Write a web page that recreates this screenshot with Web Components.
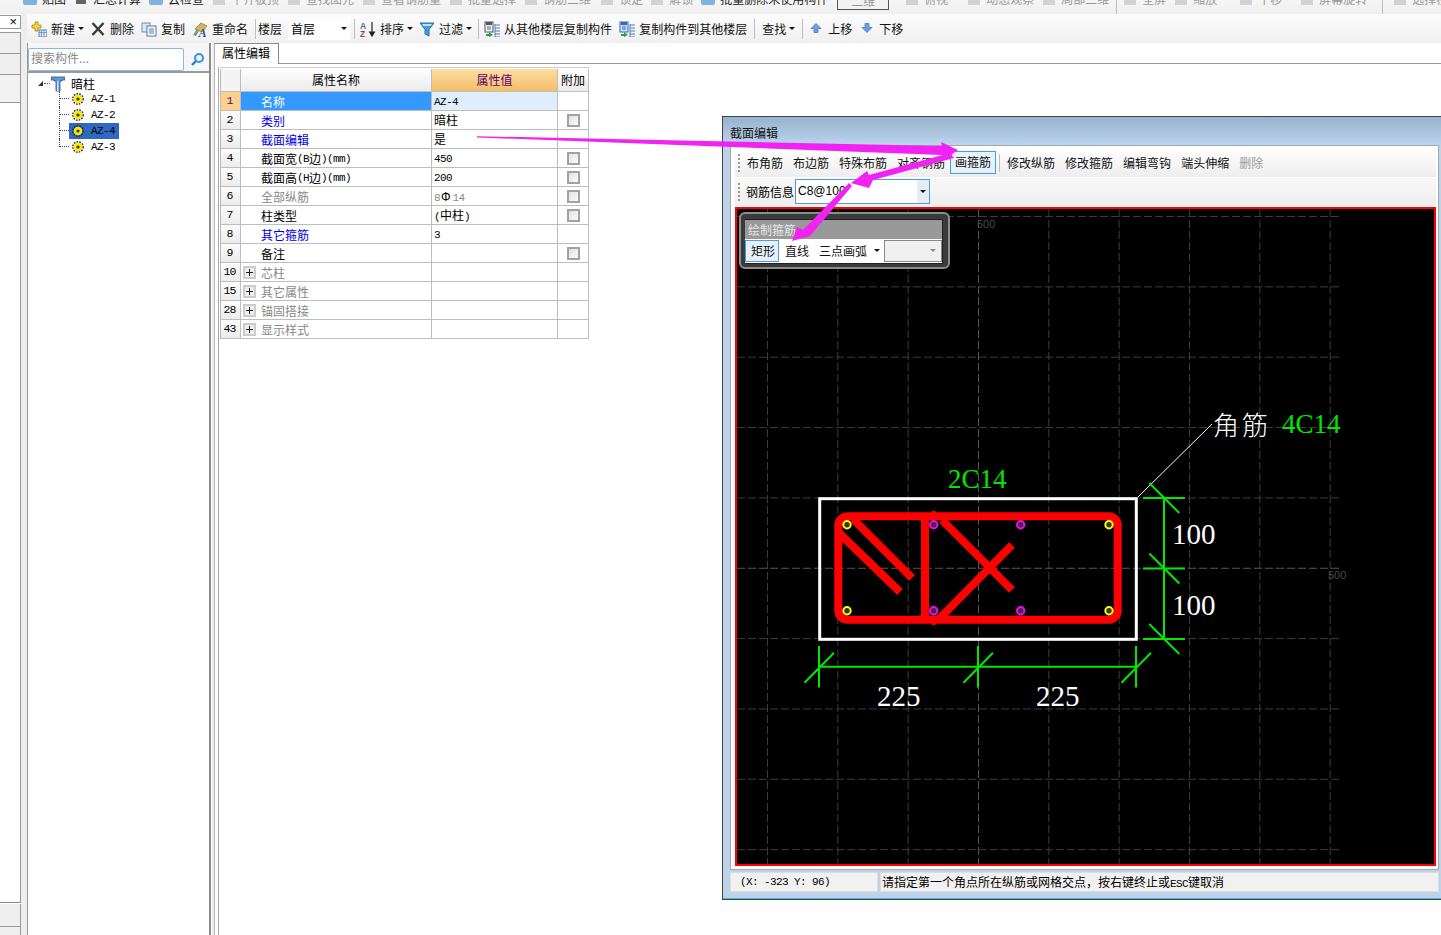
<!DOCTYPE html>
<html lang="zh">
<head>
<meta charset="utf-8">
<title>属性编辑</title>
<style>
html, body { margin: 0; padding: 0; height: 100%; overflow: hidden; background: #fff; }
body { font: 12px/14px "Noto Sans CJK SC", sans-serif; color: #000; }
</style>
</head>
<body>
<app-shell>
  <top-strip slot="strip">
    <top-item icon="blue" dark style="margin-left:22px">贴图</top-item>
    <top-item icon="dark" dark style="margin-left:7px">汇总计算</top-item>
    <top-item icon="blue" dark style="margin-left:7px">云检查</top-item>
    <top-item style="margin-left:7px">平齐板顶</top-item>
    <top-item style="margin-left:7px">查找图元</top-item>
    <top-item style="margin-left:7px">查看钢筋量</top-item>
    <top-item style="margin-left:7px">批量选择</top-item>
    <top-item style="margin-left:7px">钢筋三维</top-item>
    <top-item style="margin-left:8px">锁定</top-item>
    <top-item style="margin-left:6px">解锁</top-item>
    <top-item icon="blue" dark style="margin-left:7px">批量删除未使用构件</top-item>
    <view-box style="margin-left:9px">二维</view-box>
    <top-item style="margin-left:15px">俯视</top-item>
    <top-item style="margin-left:18px">动态观察</top-item>
    <top-item style="margin-left:7px">局部三维</top-item>
    <tool-sep style="margin-left:7px"></tool-sep>
    <top-item style="margin-left:5px">全屏</top-item>
    <top-item style="margin-left:7px">缩放</top-item>
    <top-item style="margin-left:21px">平移</top-item>
    <top-item style="margin-left:17px">屏幕旋转</top-item>
    <tool-sep style="margin-left:15px"></tool-sep>
    <top-item style="margin-left:9px">选择楼层</top-item>
  </top-strip>

  <side-rail slot="rail"></side-rail>

  <main-toolbar slot="toolbar">
    <tool-btn icon="add" arrow style="margin-left:4px">新建</tool-btn>
    <tool-btn icon="del" style="margin-left:6px">删除</tool-btn>
    <tool-btn icon="copy" style="margin-left:7px">复制</tool-btn>
    <tool-btn icon="rename" style="margin-left:7px">重命名</tool-btn>
    <tool-sep style="margin-left:7px"></tool-sep>
    <tool-btn style="margin-left:2px">楼层</tool-btn>
    <floor-combo style="margin-left:6px">首层</floor-combo>
    <tool-sep style="margin-left:4px"></tool-sep>
    <tool-btn icon="sort" arrow style="margin-left:5px">排序</tool-btn>
    <tool-btn icon="funnel" arrow style="margin-left:6px">过滤</tool-btn>
    <tool-sep style="margin-left:6px"></tool-sep>
    <tool-btn icon="from" style="margin-left:5px">从其他楼层复制构件</tool-btn>
    <tool-btn icon="to" style="margin-left:7px">复制构件到其他楼层</tool-btn>
    <tool-sep style="margin-left:7px"></tool-sep>
    <tool-btn arrow style="margin-left:7px">查找</tool-btn>
    <tool-sep style="margin-left:7px"></tool-sep>
    <tool-btn icon="up" style="margin-left:5px">上移</tool-btn>
    <tool-btn icon="down" style="margin-left:7px">下移</tool-btn>
  </main-toolbar>

  <comp-panel slot="left">
    <tree-root>暗柱</tree-root>
    <tree-node>AZ-1</tree-node>
    <tree-node>AZ-2</tree-node>
    <tree-node selected>AZ-4</tree-node>
    <tree-node last>AZ-3</tree-node>
  </comp-panel>

  <prop-panel slot="right">
    <prop-head></prop-head>
    <prop-row num="1" active>名称<mono-text slot="value">AZ-4</mono-text></prop-row>
    <prop-row num="2" kind="link" check>类别<span slot="value">暗柱</span></prop-row>
    <prop-row num="3" kind="link">截面编辑<span slot="value">是</span></prop-row>
    <prop-row num="4" check>截面宽<mono-text>(B</mono-text>边<mono-text>)(mm)</mono-text><mono-text slot="value">450</mono-text></prop-row>
    <prop-row num="5" check>截面高<mono-text>(H</mono-text>边<mono-text>)(mm)</mono-text><mono-text slot="value">200</mono-text></prop-row>
    <prop-row num="6" kind="dim" check>全部纵筋<span slot="value" style="color:#888"><mono-text>8</mono-text><span style="color:#000;font:12px/14px 'Liberation Sans',sans-serif;margin:0 2px 0 1px">Φ</span><mono-text>14</mono-text></span></prop-row>
    <prop-row num="7" check>柱类型<span slot="value"><mono-text>(</mono-text>中柱<mono-text>)</mono-text></span></prop-row>
    <prop-row num="8" kind="link">其它箍筋<mono-text slot="value">3</mono-text></prop-row>
    <prop-row num="9" check>备注</prop-row>
    <prop-row num="10" kind="dim" group>芯柱</prop-row>
    <prop-row num="15" kind="dim" group>其它属性</prop-row>
    <prop-row num="28" kind="dim" group>锚固搭接</prop-row>
    <prop-row num="43" kind="dim" group>显示样式</prop-row>
  </prop-panel>

  <section-dialog slot="dialog">
    <dialog-bar>
      <bar-text>布角筋</bar-text>
      <bar-text>布边筋</bar-text>
      <bar-text>特殊布筋</bar-text>
      <bar-text>对齐钢筋</bar-text>
      <bar-text active style="margin:0 -5px">画箍筋</bar-text>
      <tool-sep style="height:18px;margin:0 -3px 0 -2px"></tool-sep>
      <bar-text>修改纵筋</bar-text>
      <bar-text>修改箍筋</bar-text>
      <bar-text>编辑弯钩</bar-text>
      <bar-text>端头伸缩</bar-text>
      <bar-text disabled>删除</bar-text>
    </dialog-bar>
    <rebar-row slot="row2"></rebar-row>
    <rebar-canvas slot="canvas">
      <draw-palette></draw-palette>
    </rebar-canvas>
  </section-dialog>

  <arrow-overlay slot="overlay"></arrow-overlay>
</app-shell>

<script>
const GRAY = '<rect x="2" y="1" width="12" height="13" fill="#d2d2d2"/><rect x="4" y="3" width="8" height="2" fill="#eee"/>';
const ICONS = {
  gray: GRAY,
  blue: '<rect x="1" y="1" width="14" height="13" rx="2" fill="#7fb2de"/><rect x="3" y="2" width="10" height="3" fill="#d5e9f7"/><rect x="3" y="5" width="6" height="1" fill="#3d86c8"/>',
  dark: '<rect x="3" y="2" width="10" height="11" fill="#666"/><rect x="5" y="1" width="2" height="6" fill="#fff"/>',
  add: '<path d="M4 1h3v3h3v3H7v3H4V7H1V4h3z" fill="#f4d63c" stroke="#a8861a" stroke-width=".8"/><rect x="8" y="9" width="8" height="7" fill="#dfeaf6" stroke="#5b84b4"/><path d="M8 11.5h8M10.5 9v7M13 9v7" stroke="#5b84b4" stroke-width=".7"/>',
  del: '<path d="M2.5 2l11 12M13.5 2L2.5 14" stroke="#3a3a3a" stroke-width="2.4"/>',
  copy: '<rect x="1" y="2" width="8" height="9" fill="#dbe7f5" stroke="#6a8fbd"/><rect x="6" y="5" width="9" height="10" fill="#fff" stroke="#4d78ab"/><path d="M8 8h5M8 10h5M8 12h5" stroke="#4d78ab"/>',
  rename: '<path d="M3 8l6-6 6 3-5 6z" fill="#d7b25a" stroke="#8c7a3c" stroke-width=".8"/><path d="M1 14l4-6 2 2-3 5z" fill="#7f9b7f"/><text x="6.5" y="16" font-family="Liberation Serif" font-style="italic" font-weight="700" font-size="12" fill="#2456a8">A</text>',
  sort: '<text x="0" y="7.5" font-family="Liberation Sans" font-weight="700" font-size="8.5" fill="#3a6fb5">A</text><text x="0" y="16" font-family="Liberation Sans" font-weight="700" font-size="8.5" fill="#a5443c">Z</text><path d="M12 1v13M9.6 11l2.4 4 2.4-4z" stroke="#222" stroke-width="1.2" fill="#222"/>',
  funnel: '<path d="M1 2h14L10 8.5V15l-4-2V8.5z" fill="#3f9ce0" stroke="#2a6cab"/><path d="M3 3h10l-1.5 2h-7z" fill="#bfe3fa"/>',
  from: '<rect x="1" y="1" width="8" height="10" fill="#f2f2f2" stroke="#556"/><path d="M2 1h6v3H2z" fill="#556"/><path d="M3 6h4M3 8h4" stroke="#667"/><path d="M2 13h3v-2l4 3-4 2v-1H2z" fill="#2c9e3a"/><path d="M11 4h5M11 7h5M11 10h5M11 13h5M11 16h5M11 3v13" stroke="#4d7fb8"/>',
  to: '<rect x="1" y="1" width="8" height="10" fill="#cfe0f6" stroke="#36c"/><path d="M2 1h6v3H2z" fill="#36c"/><path d="M3 6h4M3 8h4" stroke="#36c"/><path d="M2 13h3v-2l4 3-4 2v-1H2z" fill="#2c9e3a"/><path d="M11 4h5M11 7h5M11 10h5M11 13h5M11 16h5M11 3v13" stroke="#4d7fb8"/>',
  up: '<path d="M8 2.5l5 5h-3v4H6v-4H3z" fill="#6aa2e6" stroke="#3b6fb8" stroke-width=".7"/>',
  down: '<path d="M8 11.5l-5-5h3v-4h4v4h3z" fill="#6aa2e6" stroke="#3b6fb8" stroke-width=".7"/>'
};

const CARET = 'display:inline-block;width:0;height:0;border:3px solid transparent;border-top:3px solid #111;border-bottom:0;';

// every element renders once, when it gets into the page, so attributes can be read
class Shadowed extends HTMLElement {
  connectedCallback() {
    if (this.shadowRoot) return;
    const shadow = this.attachShadow({ mode: 'open' });
    shadow.innerHTML = `<style>${this.constructor.css}</style>${this.html()}`;
  }
  html() { return '<slot></slot>'; }
}

class AppShell extends Shadowed {
  static css = `
:host { display: flex; flex-direction: column; position: relative; width: 1441px; height: 935px; overflow: hidden; }
.row { display: flex; flex: 1; min-height: 0; }
.work { display: flex; flex-direction: column; flex: 1; min-width: 0; }
.panes { display: flex; flex: 1; min-height: 0; }`;
  html() {
    return `<slot name="strip"></slot>
<div class="row"><slot name="rail"></slot>
  <div class="work"><slot name="toolbar"></slot><div class="panes"><slot name="left"></slot><slot name="right"></slot></div></div>
</div>
<slot name="dialog"></slot><slot name="overlay"></slot>`;
  }
}

class TopStrip extends Shadowed {
  static css = `:host { display: flex; flex: none; height: 14px; overflow: hidden; background: linear-gradient(#f6f6f6, #efefef); white-space: nowrap; }`;
}

class TopItem extends Shadowed {
  static css = `
:host { display: inline-flex; flex: none; align-items: center; gap: 4px; height: 14px; margin-top: -8px; color: #9a9a9a; }
:host([dark]) { color: #222; }
svg { width: 16px; height: 16px; flex: none; }`;
  html() {
    return `<svg viewBox="0 0 16 16">${ICONS[this.getAttribute('icon') || 'gray']}</svg><slot></slot>`;
  }
}

class ViewBox extends Shadowed {
  static css = `
:host { display: block; flex: none; box-sizing: border-box; width: 52px; height: 10px; border: 1px solid #555; border-top: 0; color: #999; text-align: center; line-height: 2px; background: #f2f2f2; }`;
}

class ToolSep extends Shadowed {
  static css = `:host { display: block; flex: none; align-self: center; width: 1px; height: 20px; background: #bdbdbd; }`;
  html() { return ''; }
}

class SideRail extends Shadowed {
  static css = `
:host { display: flex; flex-direction: column; flex: none; box-sizing: border-box; width: 27px; background: linear-gradient(90deg, #fff 21px, #eee 21px); }
div { box-sizing: border-box; width: 21px; flex: none; border-right: 1px solid #999; }
.tab { height: 14px; margin-top: 1px; background: #fff; border: 1px solid #999; border-left: 0; font: 13px/12px "Liberation Sans", sans-serif; text-align: right; padding-right: 3px; }
.btn { height: 21px; background: #efefef; border-top: 1px solid #999; }
.list { flex: 1; background: #fff; border-top: 1px solid #999; border-bottom: 1px solid #888; }`;
  html() {
    return `<div class="tab">×</div><div class="btn" style="margin-top:3px"></div><div class="btn"></div><div class="btn" style="height:28px;background:#f2f2f2"></div>
<div class="list"></div><div class="btn" style="margin-top:1px;height:22px;border-top:0"></div><div class="btn" style="height:9px"></div>`;
  }
}

class MainToolbar extends Shadowed {
  static css = `:host { display: flex; flex: none; align-items: center; height: 29px; background: linear-gradient(#fdfdfd, #efefef); white-space: nowrap; }`;
}

class ToolBtn extends Shadowed {
  static css = `
:host { display: inline-flex; flex: none; align-items: center; gap: 4px; height: 20px; color: #111; }
svg { width: 16px; height: 16px; flex: none; }
i { ${CARET} margin-left: -1px; }`;
  html() {
    const icon = this.getAttribute('icon');
    return `${icon ? `<svg viewBox="0 0 16 16">${ICONS[icon]}</svg>` : ''}<slot></slot>${this.hasAttribute('arrow') ? '<i></i>' : ''}`;
  }
}

class FloorCombo extends Shadowed {
  static css = `
:host { display: flex; flex: none; align-items: center; justify-content: space-between; box-sizing: border-box; width: 62px; height: 22px; padding: 0 3px; background: #fff; }
i { ${CARET} }`;
  html() { return `<slot></slot><i></i>`; }
}

class CompPanel extends Shadowed {
  static css = `
:host { display: flex; flex: none; box-sizing: border-box; width: 187px; background: linear-gradient(90deg, #fff 184px, #eee 184px); border-left: 1px solid #999; }
.col { display: flex; flex-direction: column; width: 183px; box-sizing: border-box; border-right: 2px solid #8c8c8c; }
.search { display: flex; flex: none; align-items: center; gap: 6px; height: 30px; box-sizing: border-box; padding-top: 5px; background: #f6f6f8; border-bottom: 2px solid #9a9a9a; }
.box { box-sizing: border-box; width: 156px; height: 23px; margin-top: -1px; padding: 2px 2px; background: #fff; border: 1px solid #8cb6dc; border-radius: 2px; color: #888; }
svg { width: 15px; height: 15px; margin-top: -1px; }
.tree { flex: 1; padding-top: 3px; background: #fff; }`;
  html() {
    return `<div class="col"><div class="search"><div class="box">搜索构件...</div>
<svg viewBox="0 0 15 15"><circle cx="9" cy="6" r="4" fill="#e4f2fc" stroke="#3f93d6" stroke-width="2"/><path d="M6 9l-4 4" stroke="#2f7cc0" stroke-width="2.4"/></svg></div>
<div class="tree"><slot></slot></div></div>`;
  }
}

class TreeRoot extends Shadowed {
  static css = `
:host { display: flex; align-items: center; height: 15px; padding-left: 10px; }
i { width: 0; height: 0; border-style: solid; border-width: 0 0 5px 5px; border-color: transparent transparent #333 transparent; }
b { width: 6px; margin: 0 1px; border-top: 1px dotted #555; }
svg { width: 14px; height: 16px; margin-right: 6px; flex: none; }`;
  html() {
    return `<i></i><b></b><svg viewBox="0 0 14 16"><path d="M0 1h14v3h-3v1H9v10H5V5H3V4H0z" fill="#5e9ad6" stroke="#23518f" stroke-width=".8"/><path d="M6 5h1.5v10H6z" fill="#d4e6f7"/></svg><slot></slot>`;
  }
}

class TreeNode extends Shadowed {
  static css = `
:host { display: flex; align-items: center; height: 16px; margin-left: 31px; border-left: 1px dotted #444; font: 11px/17px "Liberation Mono", monospace; letter-spacing: -.6px; box-sizing: border-box; }
:host([last]) { border-left-color: transparent; }
.c { width: 9px; height: 8px; align-self: flex-start; border-bottom: 1px dotted #444; flex: none; box-sizing: border-box; }
:host([last]) .c { border-left: 1px dotted #444; margin-left: -1px; width: 10px; }
.l { display: flex; align-items: center; gap: 7px; height: 16px; padding: 0 3px 0 3px; width: 44px; }
:host([selected]) .l { background: #2f68c2; }
svg { width: 12px; height: 12px; flex: none; }`;
  html() {
    return `<div class="c"></div><div class="l"><svg viewBox="0 0 12 12"><circle cx="6" cy="6" r="5.2" fill="none" stroke="#222" stroke-width="1.4" stroke-dasharray="1.6 1.2"/><circle cx="6" cy="6" r="4.3" fill="#ffe800"/><circle cx="6" cy="6" r="1.6" fill="#333"/></svg><slot></slot></div>`;
  }
}

class PropPanel extends Shadowed {
  static css = `
:host { display: flex; flex-direction: column; flex: 1; min-width: 0; box-sizing: border-box; border-left: 1px solid #b4b4b4; background: #fff; }
.tabs { display: flex; flex: none; height: 21px; box-sizing: border-box; }
.tab { box-sizing: border-box; width: 64px; height: 21px; padding: 2px 0 0 7px; border: 1px solid #8a8a8a; border-bottom: 0; border-left: 0; background: #fff; }
.rest { flex: 1; border-bottom: 1px solid #999; }
.frame { flex: 1; margin: 3px 0 0 3px; border-left: 1px solid #aaa; padding-left: 1px; }
.table { width: 369px; border-top: 1px solid #ccc; padding-top: 1px; }
.inner { border-left: 1px solid #bbb; }`;
  html() {
    return `<div class="tabs"><div class="tab">属性编辑</div><div class="rest"></div></div>
<div class="frame"><div class="table"><div class="inner"><slot></slot></div></div></div>`;
  }
}

const COLUMNS = 'display: grid; grid-template-columns: 20px 191px 126px 31px;';
const CELL = 'box-sizing: border-box; border-right: 1px solid #bdbdbd; border-bottom: 1px solid #bdbdbd; min-width: 0;';

class PropHead extends Shadowed {
  static css = `
:host { ${COLUMNS} grid-template-rows: 23px; height: 23px; }
div { ${CELL} text-align: center; line-height: 21px; background: linear-gradient(#fff, #ebebeb); }
.v { background: linear-gradient(#fdddA4, #f3bf66); color: #5e0070; }
.n { background: #f4f4f4; }`;
  html() { return `<div class="n"></div><div>属性名称</div><div class="v">属性值</div><div>附加</div>`; }
}

class PropRow extends Shadowed {
  static css = `
:host { ${COLUMNS} grid-template-rows: 19px; height: 19px; }
div { ${CELL} line-height: 18px; }
.n { font: 11.5px/17px "Liberation Mono", monospace; letter-spacing: -1px; text-align: center; background: linear-gradient(#fcfcfc, #ececec); padding: 0 2px 0 0; }
.name { display: flex; align-items: center; padding: 2px 0 0 20px; }
.val { padding-left: 2px; white-space: nowrap; }
.val ::slotted(mono-text) { vertical-align: 1px; }
.add { display: flex; align-items: center; justify-content: center; padding: 0; }
:host([active]) .n { background: #fdd08e; color: #5e0070; }
:host([active]) .name { background: #3399ff; color: #fff; }
:host([active]) .val { background: #deeefc; }
:host([kind=link]) .name { color: #0000e0; }
:host([kind=dim]) .name { color: #888; }
.chk { width: 13px; height: 13px; box-sizing: border-box; border: 2px solid #a2a2a2; background: linear-gradient(135deg, #e2e2e2, #fbfbfb); }
.plus { width: 13px; height: 13px; box-sizing: border-box; border: 2px solid #ccc; margin: -2px 5px 0 -18px; background: linear-gradient(90deg, #222, #222) center/7px 1px no-repeat, linear-gradient(#222, #222) center/1px 7px no-repeat, #eee; flex: none; }`;
  html() {
    const plus = this.hasAttribute('group');
    return `<div class="n">${this.getAttribute('num')}</div>
<div class="name">${plus ? '<span class="plus"></span>' : ''}<slot></slot></div>
<div class="val"><slot name="value"></slot></div>
<div class="add">${this.hasAttribute('check') ? '<span class="chk"></span>' : ''}</div>`;
  }
}

class MonoText extends Shadowed {
  static css = `:host { display: inline; font: 11px/14px "Liberation Mono", monospace; letter-spacing: -.6px; }`;
}

class SectionDialog extends Shadowed {
  static css = `
:host { display: flex; flex-direction: column; position: absolute; left: 722px; top: 116px; width: 719px; height: 784px; box-sizing: border-box; border: 1px solid #444; border-right: 0; background: #bdd3ea; box-shadow: inset 0 -1px 0 #3fb6e6; }
.title { flex: none; height: 28px; box-sizing: border-box; padding: 9px 0 0 7px; background: linear-gradient(#97b2ce, #bcd4ec); color: #111; }
.frame { flex: none; display: flex; flex-direction: column; box-sizing: border-box; width: 709px; height: 725px; margin-left: 7px; border: 1px solid #a8a8a8; padding: 2px 2px 3px 4px; background: #fff; }
.bar { height: 29px; flex: none; display: flex; }
.row2 { height: 28px; flex: none; margin-top: 1px; }
.stat { display: flex; gap: 2px; height: 20px; margin: 2px 0 0 7px; width: 709px; }
.stat div { box-sizing: border-box; height: 20px; background: #f1f1f1; border: 1px solid #ddd; line-height: 18px; white-space: nowrap; }
.x { width: 148px; padding-left: 9px; font: 11px/18px "Liberation Mono", monospace !important; letter-spacing: -.6px; }
.t { flex: 1; padding-left: 1px; }
.t span { font: 11px/14px "Liberation Mono", monospace; letter-spacing: -.6px; }`;
  html() {
    return `<div class="title">截面编辑</div>
<div class="frame"><div class="bar"><slot></slot></div><div class="row2"><slot name="row2"></slot></div><slot name="canvas"></slot></div>
<div class="stat"><div class="x">(X: -323 Y: 96)</div><div class="t">请指定第一个角点所在纵筋或网格交点，按右键终止或<span>ESC</span>键取消</div></div>`;
  }
}

const GRIP = 'flex:none;width:2px;height:18px;background:radial-gradient(circle at 1px 1px,#999 1px,transparent 1px) 0 0/2px 4px;';

class DialogBar extends Shadowed {
  static css = `
:host { display: flex; flex: 1; align-items: center; gap: 10px; box-sizing: border-box; padding-left: 3px; background: linear-gradient(#fff, #eee); white-space: nowrap; }
i { ${GRIP} margin-right: -3px; }`;
  html() { return `<i></i><slot></slot>`; }
}

class BarText extends Shadowed {
  static css = `
:host { display: block; flex: none; color: #111; }
:host([active]) { box-sizing: border-box; height: 23px; padding: 3px 4px 0; border: 1px solid #4a9be8; background: #e8f2fb; }
:host([disabled]) { color: #999; }`;
}

class RebarRow extends Shadowed {
  static css = `
:host { display: flex; align-items: center; gap: 7px; height: 28px; box-sizing: border-box; padding: 0 0 1px 3px; background: linear-gradient(#f8f8f8, #eee); }
i.g { ${GRIP} margin-right: -1px; }
.combo { display: flex; align-items: stretch; justify-content: space-between; box-sizing: border-box; width: 135px; height: 25px; margin-left: -6px; background: #fff; border: 1px solid #4a9be8; font: 12px/23px "Liberation Sans", sans-serif; padding-left: 2px; }
.drop { display: flex; align-items: center; justify-content: center; width: 12px; background: #e6edf6; }
.drop i { ${CARET} }`;
  html() {
    return `<i class="g"></i><span>钢筋信息</span><div class="combo"><span>C8@100</span><div class="drop"><i></i></div></div>`;
  }
}

class RebarCanvas extends Shadowed {
  static css = `
:host { display: block; position: relative; flex: 1; min-height: 0; margin-top: 1px; border: 2px solid #f00; background: #000; overflow: hidden; }
svg { display: block; width: 697px; height: 655px; }
text { font-family: "Liberation Serif", serif; font-size: 29px; fill: #fff; }
.g { fill: #00e800; font-size: 27px; }
.z { font: 11px "Liberation Sans", sans-serif; fill: #4a4a4a; }
.c { font: 200 26px "Noto Sans CJK SC", sans-serif; letter-spacing: 3px; }`;
  html() {
    let grid = '';
    for (let i = 0; i < 9; i++) {
      const x = 767.5 + i * 70.33;
      grid += `<path d="M${x} 209V864" stroke="${i === 3 ? '#585858' : '#3c3c3c'}" stroke-dasharray="8 3"/>`;
    }
    for (let i = 0; i < 10; i++) {
      const y = 216.5 + i * 70.35;
      grid += `<path d="M737 ${y}H1341" stroke="${i === 5 ? '#585858' : '#3c3c3c'}" stroke-dasharray="8 3"/>`;
    }
    const bars = [[847, 524.7, '#ff0'], [847, 610.7, '#ff0'], [1109, 524.7, '#ff0'], [1109, 610.7, '#ff0'],
      [933.7, 524.7, '#f0f'], [933.7, 610.7, '#f0f'], [1020.7, 524.7, '#f0f'], [1020.7, 610.7, '#f0f']]
      .map(([x, y, c]) => `<circle cx="${x}" cy="${y}" r="3.7" fill="#333" stroke="${c}" stroke-width="2"/>`).join('');
    const hTick = x => `<path d="M${x} 646V687.5M${x - 14.5} 682.7L${x + 15} 652.7"/>`;
    const vTick = y => `<path d="M1143 ${y}H1185M1149.3 ${y - 15}L1179.3 ${y + 15}"/>`;
    return `<svg viewBox="737 209 697 655">${grid}
<text class="z" x="977" y="228">500</text><text class="z" x="1328" y="579">500</text>
<rect x="819.7" y="498.7" width="316.6" height="140.6" fill="none" stroke="#fff" stroke-width="3"/>
<path d="M1138 497L1212 424" stroke="#fff"/>
<g stroke="#f00" stroke-width="8" fill="none">
  <rect x="838.3" y="516.3" width="279.4" height="103.4" rx="9"/>
  <path d="M925 516V620M853 519L912 578M839 533L900 592M942 520L1012 590M938 620L1012 545"/>
</g>
<path d="M933.5 511V516M933.5 620V625" stroke="#f00" stroke-width="4"/>
${bars}
<g stroke="#00e800" stroke-width="2" fill="none">
  <path d="M819 666.7H1136"/>${hTick(819)}${hTick(978)}${hTick(1136)}
  <path d="M1164 498V639"/>${vTick(498)}${vTick(568.5)}${vTick(639)}
</g>
<text class="g" x="948" y="488">2C14</text>
<text class="c" x="1213" y="435">角筋</text>
<text class="g" x="1282" y="433">4C14</text>
<text x="1172" y="544">100</text><text x="1172" y="615">100</text>
<text x="877" y="706">225</text><text x="1036" y="706">225</text>
</svg><slot></slot>`;
  }
}

class DrawPalette extends Shadowed {
  static css = `
:host { display: block; position: absolute; left: 2px; top: 3px; box-sizing: border-box; width: 211px; height: 57px; padding: 5px 5px 5px 4px; border-radius: 6px; background: #3a3a3a; border: 2px solid #8d8d8d; font: 12px/14px "Noto Sans CJK SC", sans-serif; white-space: nowrap; }
.in { border: 1px solid #222; border-left: 0; }
.t { height: 19px; box-sizing: border-box; padding: 3px 0 0 3px; background: #999; color: #e8e8e8; }
.b { display: flex; align-items: center; height: 24px; box-sizing: border-box; padding-bottom: 1px; background: #fff; color: #111; }
.on { box-sizing: border-box; flex: none; width: 34px; height: 22px; padding: 3px 0 0 5px; border: 1px solid #4a9be8; background: #e5f0fb; margin-right: 6px; }
.m { margin-left: 10px; }
i { ${CARET} flex: none; margin: 0 4px 0 7px; }
.c { display: flex; flex: none; align-items: center; justify-content: flex-end; box-sizing: border-box; width: 58px; height: 22px; padding-right: 5px; border: 1px solid #888; background: #f0f0f0; }
.c i { margin: 0; border-top-color: #888; }`;
  html() {
    return `<div class="in"><div class="t">绘制箍筋</div><div class="b"><span class="on">矩形</span><span>直线</span><span class="m">三点画弧</span><i></i><span class="c"><i></i></span></div></div>`;
  }
}

class ArrowOverlay extends Shadowed {
  static css = `
:host { display: block; position: absolute; left: 0; top: 0; width: 1441px; height: 935px; pointer-events: none; }
svg { display: block; width: 1441px; height: 935px; }`;
  html() {
    return `<svg viewBox="0 0 1441 935" fill="#f223f2">
<polygon points="477,136.2 942,146 941,142 958,150 944,160 942,155 477,137.4"/>
<polygon points="950,153 954,158 873,180 869,188 851,183 867,171 869,175"/>
<polygon points="849,183 852,186 810,236 792,241 797,227 803,230"/>
</svg>`;
  }
}

const elements = {
  'app-shell': AppShell, 'top-strip': TopStrip, 'top-item': TopItem, 'view-box': ViewBox, 'tool-sep': ToolSep,
  'side-rail': SideRail, 'main-toolbar': MainToolbar, 'tool-btn': ToolBtn, 'floor-combo': FloorCombo,
  'comp-panel': CompPanel, 'tree-root': TreeRoot, 'tree-node': TreeNode, 'prop-panel': PropPanel,
  'prop-head': PropHead, 'prop-row': PropRow, 'mono-text': MonoText, 'section-dialog': SectionDialog,
  'dialog-bar': DialogBar, 'bar-text': BarText, 'rebar-row': RebarRow, 'rebar-canvas': RebarCanvas,
  'draw-palette': DrawPalette, 'arrow-overlay': ArrowOverlay
};
for (const [name, cls] of Object.entries(elements)) customElements.define(name, cls);
</script>
</body>
</html>
